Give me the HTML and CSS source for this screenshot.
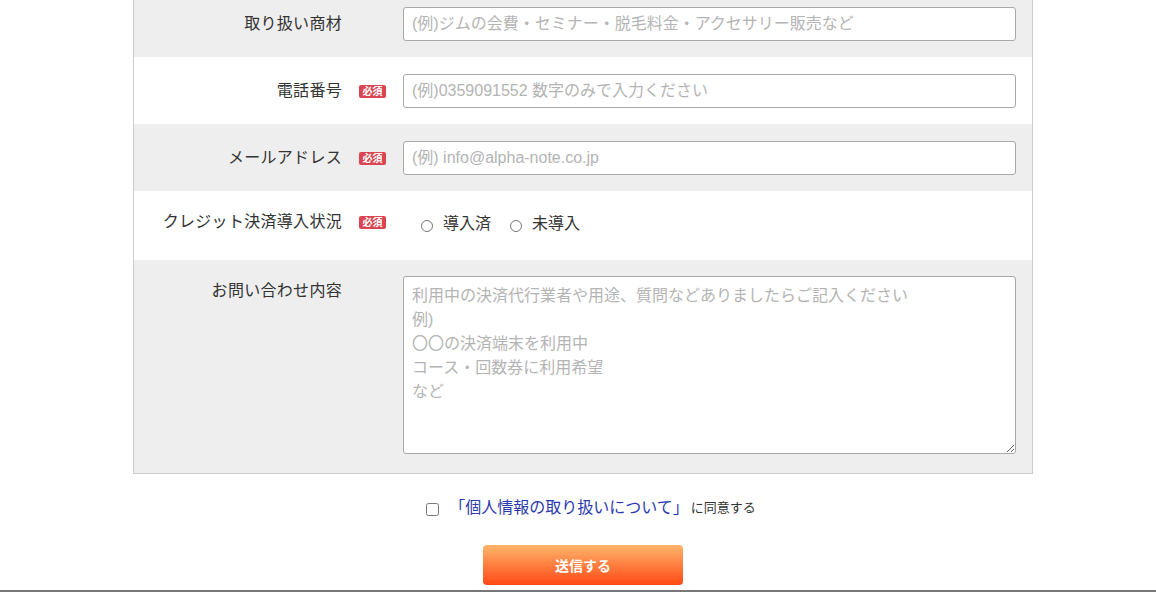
FILE: index.html
```html
<!DOCTYPE html>
<html lang="ja">
<head>
<meta charset="utf-8">
<title>お問い合わせ</title>
<link rel="stylesheet" href="styles.css">
</head>
<body>
<div class="page">
  <form class="form">
    <div class="table">
      <div class="row gray first">
        <div class="label">取り扱い商材</div>
        <div class="mark"></div>
        <div class="field"><input class="text" type="text" placeholder="(例)ジムの会費・セミナー・脱毛料金・アクセサリー販売など"></div>
      </div>
      <div class="row">
        <div class="label">電話番号</div>
        <div class="mark"><span class="req">必須</span></div>
        <div class="field"><input class="text" type="text" placeholder="(例)0359091552 数字のみで入力ください"></div>
      </div>
      <div class="row gray">
        <div class="label">メールアドレス</div>
        <div class="mark"><span class="req">必須</span></div>
        <div class="field"><input class="text" type="text" placeholder="(例) info@alpha-note.co.jp"></div>
      </div>
      <div class="row radio-row">
        <div class="label">クレジット決済導入状況</div>
        <div class="mark"><span class="req">必須</span></div>
        <div class="field radios">
          <label class="opt"><input type="radio" name="credit"><span>導入済</span></label>
          <label class="opt"><input type="radio" name="credit"><span>未導入</span></label>
        </div>
      </div>
      <div class="row gray area-row">
        <div class="label">お問い合わせ内容</div>
        <div class="mark"></div>
        <div class="field"><textarea class="area" placeholder="利用中の決済代行業者や用途、質問などありましたらご記入ください&#10;例)&#10;〇〇の決済端末を利用中&#10;コース・回数券に利用希望&#10;など"></textarea></div>
      </div>
    </div>
    <div class="agree">
      <label><input type="checkbox" class="check"><a href="#" class="link">「個人情報の取り扱いについて」</a><span class="small">に同意する</span></label>
    </div>
    <div class="submit-wrap">
      <button type="button" class="submit">送信する</button>
    </div>
  </form>
</div>
<div class="footer"></div>
</body>
</html>
```

FILE: styles.css
```css
* { box-sizing: border-box; }
html, body { margin: 0; padding: 0; background: #fff; }
body {
  font-family: "Liberation Sans", "Noto Sans CJK JP", sans-serif;
  color: #333;
  font-size: 16px;
}
.page {
  width: 910px;
  margin: -10px auto 0;
  padding-left: 10px;
}
.table {
  border: 1px solid #ccc;
  border-top: none;
}
.row {
  display: flex;
  align-items: center;
  padding: 17px 16px 16px 0;
  background: #fff;
}
.row.gray { background: #eee; }
.label {
  width: 208px;
  text-align: right;
  line-height: 24px;
  flex: none;
  white-space: nowrap;
  letter-spacing: 0.3px;
}
.mark {
  width: 61px;
  flex: none;
  padding-left: 17px;
  display: flex;
  align-items: center;
}
.req {
  display: inline-block;
  width: 27px;
  height: 13px;
  line-height: 13px;
  border-radius: 2px;
  background: #db4552;
  color: #fff;
  font-size: 10px;
  font-weight: bold;
  text-align: center;
  margin-top: 1px;
}
.field { flex: 1; }
.text {
  display: block;
  width: 100%;
  height: 34px;
  border: 1px solid #a9a9a9;
  border-radius: 3px;
  padding: 0 8px;
  font-family: "Liberation Sans", "Noto Sans CJK JP", sans-serif;
  font-size: 16px;
  color: #333;
  background: #fff;
}
.text::placeholder, .area::placeholder { color: #b4b4b4; }
.radio-row {
  align-items: flex-start;
  padding-top: 19px;
  padding-bottom: 24px;
}
.radio-row .mark { padding-top: 5px; }
.radios {
  display: flex;
  align-items: center;
  padding-left: 18px;
  padding-top: 2px;
}
.opt {
  display: flex;
  align-items: center;
  margin-right: 19px;
  line-height: 24px;
}
.opt input {
  width: 12px;
  height: 12px;
  margin: 3px 10px 0 0;
}
.area-row {
  align-items: flex-start;
  padding-top: 16px;
  padding-bottom: 19px;
}
.area-row .label { padding-top: 3px; }
.area {
  display: block;
  width: 100%;
  height: 178px;
  border: 1px solid #a9a9a9;
  border-radius: 3px;
  padding: 7px 8px;
  font-family: "Liberation Sans", "Noto Sans CJK JP", sans-serif;
  font-size: 16px;
  line-height: 24px;
  color: #333;
  background: #fff;
  resize: vertical;
}
.agree {
  margin-top: 22px;
  text-align: center;
  line-height: 24px;
  padding-left: 16px;
}
.agree label { display: inline-flex; align-items: center; }
.check {
  width: 13px;
  height: 13px;
  margin: 2px 10px 0 0;
}
.link {
  color: #2b3aae;
  text-decoration: none;
  font-size: 16px;
}
.small {
  font-size: 13px;
  color: #333;
  margin-left: 2px;
}
.submit-wrap {
  text-align: center;
  margin-top: 22px;
}
.submit {
  width: 200px;
  height: 40px;
  border: none;
  border-radius: 4px;
  background: linear-gradient(to bottom, #ffb56c, #ff4914);
  color: #fff;
  font-family: "Liberation Sans", "Noto Sans CJK JP", sans-serif;
  font-weight: bold;
  font-size: 14px;
  cursor: pointer;
}
.footer {
  margin-top: 5px;
  border-top: 2px solid #777;
  height: 20px;
}
```
